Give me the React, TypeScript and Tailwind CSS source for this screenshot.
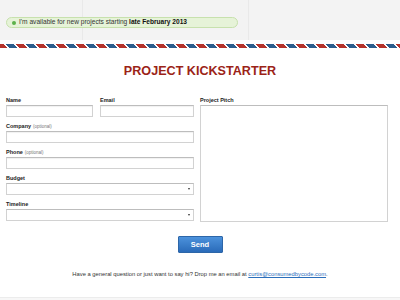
import React from 'react';

const font = { fontFamily: '"Liberation Sans", Arial, sans-serif' };

function Label({ text, optional }: { text: string; optional?: boolean }) {
  return (
    <div className="h-[6px] leading-[6px] mb-[2px] text-[5.5px] font-bold text-[#222] whitespace-nowrap">
      {text}
      {optional && <span className="ml-[2px] text-[4.5px] font-normal text-[#777]">(optional)</span>}
    </div>
  );
}

function Input() {
  return <div className="h-[12px] w-full bg-white border border-[#d2d2d2] border-t-[#bdbdbd] shadow-[inset_0_1px_1px_rgba(0,0,0,0.06)]" />;
}

function Select() {
  return (
    <div className="h-[12px] w-full bg-white border border-[#d2d2d2] border-t-[#bdbdbd] flex items-center justify-end pr-[3px]">
      <div className="w-0 h-0 border-l-[1.5px] border-r-[1.5px] border-t-[2px] border-l-transparent border-r-transparent border-t-[#333]" />
    </div>
  );
}

export default function App() {
  return (
    <div className="w-[400px] h-[300px] bg-white overflow-hidden flex flex-col" style={font}>
      {/* top bar */}
      <div className="relative h-[40px] bg-[#f3f3f3] pt-[17px] px-[6px]">
        <div className="absolute left-[82px] top-0 h-full w-px bg-[#e9e9e9]" />
        <div className="absolute left-[248px] top-0 h-full w-px bg-[#e9e9e9]" />
        <div className="relative flex items-center h-[11px] w-[232px] rounded-full bg-[#e6f3d8] border border-[#c7e1ad] pl-[5px] gap-[3px]">
          <span className="w-[4px] h-[4px] rounded-full bg-[#5cb24a]" />
          <span className="text-[6.6px] leading-none text-[#333] whitespace-nowrap">
            I'm available for new projects starting <b className="text-[#111]">late February 2013</b>
          </span>
        </div>
      </div>

      {/* airmail stripe */}
      <div className="mt-[4px] h-[4px] bg-[repeating-linear-gradient(45deg,#b5332c_0_5px,transparent_5px_7.07px,#2b5d8c_7.07px_12.07px,transparent_12.07px_14.14px)]" />

      <h1 className="mt-[16px] text-center text-[12.6px] leading-[14px] font-bold text-[#9b2317]">
        PROJECT KICKSTARTER
      </h1>

      {/* form */}
      <div className="mt-[19px] px-[6px] grid grid-cols-[188px_188px] gap-x-[6px]">
        <div className="flex flex-col gap-[6px]">
          <div className="grid grid-cols-[87px_1fr] gap-x-[7px]">
            <div>
              <Label text="Name" />
              <Input />
            </div>
            <div>
              <Label text="Email" />
              <Input />
            </div>
          </div>
          <div>
            <Label text="Company" optional />
            <Input />
          </div>
          <div>
            <Label text="Phone" optional />
            <Input />
          </div>
          <div>
            <Label text="Budget" />
            <Select />
          </div>
          <div>
            <Label text="Timeline" />
            <Select />
          </div>
        </div>
        <div className="flex flex-col">
          <Label text="Project Pitch" />
          <div className="h-[117px] bg-white border border-[#d2d2d2] border-t-[#bdbdbd]" />
        </div>
      </div>

      <div className="mt-[14px] flex justify-center">
        <button className="w-[45px] h-[17px] rounded-[1px] border border-[#2d66a8] bg-gradient-to-b from-[#4c92dc] to-[#2a6bb9] text-white text-[7.5px] font-bold">
          Send
        </button>
      </div>

      <p className="mt-[17px] text-center text-[5.8px] text-[#333] whitespace-nowrap">
        Have a general question or just want to say hi? Drop me an email at{' '}
        <span className="text-[#2a6ebb] underline">curtis@consumedbycode.com</span>.
      </p>

      <div className="mt-auto h-[3px] border-t border-[#ececec] bg-[#f7f7f7]" />
    </div>
  );
}
